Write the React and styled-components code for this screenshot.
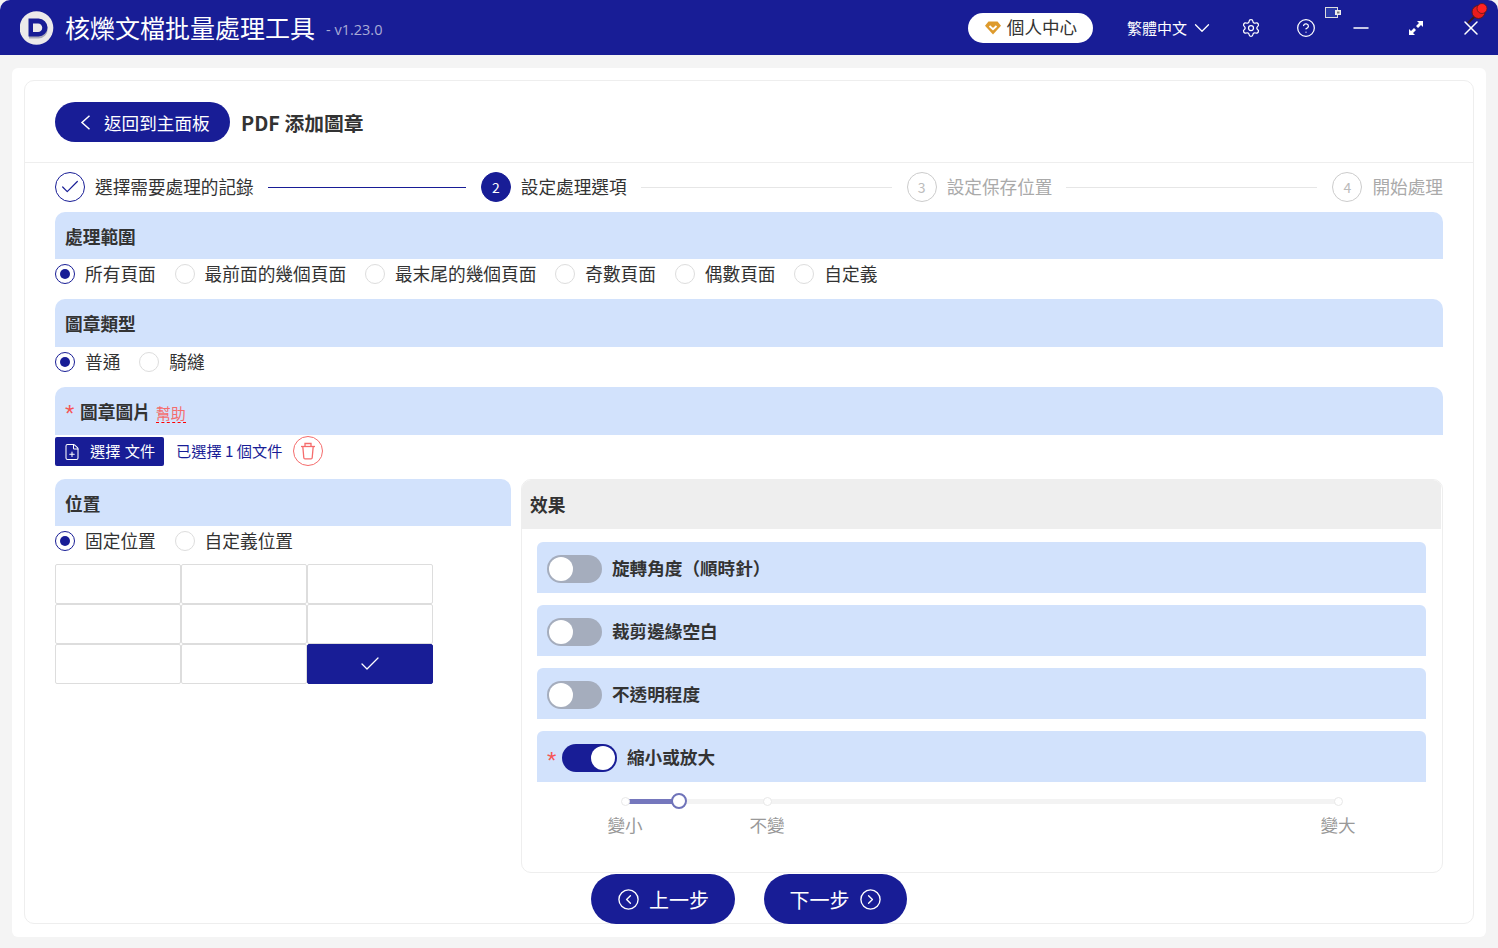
import React from "react";
import styled, { createGlobalStyle } from "styled-components";
import {
  Check,
  ChevronDown,
  CircleChevronLeft,
  CircleChevronRight,
  CircleHelp,
  FilePlus,
  Minus,
  Settings,
  X,
} from "lucide-react";

const BLUE = "#181d96";
const LIGHT = "#d2e2fc";
const FONT = `"Noto Sans CJK TC", "Noto Sans", sans-serif`;

const GlobalStyle = createGlobalStyle`
  html, body { margin: 0; padding: 0; background: #f4f4f4; }
  body { font-family: ${FONT}; color: #333; overflow: hidden; }
  * { box-sizing: border-box; }
`;

const Page = styled.div`
  width: 1498px;
  height: 948px;
  display: flex;
  flex-direction: column;
`;

const TopBar = styled.header`
  position: relative;
  flex: 0 0 55px;
  display: flex;
  align-items: center;
  padding: 0 17px 0 20px;
  background: ${BLUE};
  color: #fff;
  border-radius: 10px 10px 0 0;
`;

const Logo = styled.svg`
  width: 34px;
  height: 34px;
  margin-right: 11px;
  flex: none;
`;

const AppTitle = styled.div`
  font-size: 25px;
  line-height: 55px;
  white-space: nowrap;
`;

const Version = styled.span`
  margin-left: 11px;
  margin-top: 3px;
  font-family: "Open Sans", sans-serif;
  font-size: 14.5px;
  color: #a9abd6;
`;

const UserButton = styled.div`
  margin-left: auto;
  width: 125px;
  height: 30px;
  display: flex;
  align-items: center;
  justify-content: center;
  gap: 5px;
  background: #fff;
  color: #333;
  border-radius: 15px;
  font-size: 17.6px;
  padding-bottom: 2px;
  svg {
    margin-top: 2px;
  }
`;

const LangSwitch = styled.div`
  display: flex;
  align-items: center;
  gap: 2px;
  margin-left: 34px;
  font-size: 15px;
  width: 84px;
  white-space: nowrap;
  svg {
    flex: none;
  }
`;

const BarIcon = styled.span`
  display: flex;
  width: 20px;
  justify-content: center;
  margin-left: ${(p) => p.$gap}px;
  svg {
    flex: none;
  }
`;

const SmallWindow = styled.svg`
  position: absolute;
  left: 1325px;
  top: 7px;
`;

const Pin = styled.svg`
  position: absolute;
  left: 1466px;
  top: 1px;
`;

const Outer = styled.main`
  flex: 1;
  min-height: 0;
  padding: 13px 12px 11px;
`;

const Panel = styled.div`
  height: 100%;
  background: #fff;
  border-radius: 6px;
  padding: 12px 12px 13px;
`;

const Card = styled.div`
  height: 100%;
  border: 1px solid #eee;
  border-radius: 10px;
  display: flex;
  flex-direction: column;
`;

const CardHead = styled.div`
  height: 82px;
  flex: none;
  display: flex;
  align-items: flex-start;
  padding: 21px 30px 0;
  border-bottom: 1px solid #eee;
`;

const BackButton = styled.button`
  width: 175px;
  height: 40px;
  display: flex;
  align-items: center;
  gap: 13px;
  padding: 0 0 0 25px;
  border: 0;
  border-radius: 20px;
  background: ${BLUE};
  color: #fff;
  font-family: ${FONT};
  font-size: 17.6px;
`;

const PageTitle = styled.h1`
  margin: 0 0 0 11px;
  font-size: 19.8px;
  line-height: 42px;
  font-weight: 700;
  color: #333;
`;

const Content = styled.div`
  flex: 1;
  min-height: 0;
  display: flex;
  flex-direction: column;
  padding: 9px 30px 0;
  & > * {
    flex: none;
  }
`;

const Stepper = styled.div`
  display: flex;
  height: 30px;
  margin-bottom: 10px;
`;

const Step = styled.div`
  display: flex;
  align-items: center;
  flex: ${(p) => (p.$last ? "0 0 110px" : "1 1 0")};
  font-size: 17.65px;
  white-space: nowrap;
  color: ${(p) => (p.$muted ? "#aaa" : "#333")};
`;

const StepText = styled.span`
  padding-bottom: 2px;
`;

const StepDot = styled.span`
  width: 30px;
  height: 30px;
  flex: none;
  display: flex;
  align-items: center;
  justify-content: center;
  margin-right: 10px;
  border-radius: 50%;
  font-size: 14px;
  border: 1px solid ${(p) => (p.$state === "todo" ? "#ccc" : BLUE)};
  background: ${(p) => (p.$state === "active" ? BLUE : "#fff")};
  color: ${(p) => (p.$state === "active" ? "#fff" : p.$state === "todo" ? "#bbb" : BLUE)};
`;

const StepLine = styled.span`
  flex: 1;
  height: 1px;
  margin: 0 15px 0 14px;
  background: ${(p) => (p.$done ? BLUE : "#e6e6e6")};
`;

const SectionBar = styled.div`
  height: ${(p) => p.$h || 47}px;
  display: flex;
  align-items: center;
  padding-left: 10px;
  background: ${LIGHT};
  border-radius: 10px 10px 0 0;
  font-size: 17.7px;
  font-weight: 700;
  color: #333;
`;

const RadioRow = styled.div`
  height: 30px;
  display: flex;
  align-items: center;
  margin-bottom: ${(p) => p.$mb || 0}px;
`;

const RadioItem = styled.label`
  display: flex;
  align-items: center;
  margin-right: 18.8px;
  font-size: 17.7px;
  color: #333;
`;

const RadioText = styled.span`
  padding-bottom: 3px;
`;

const RadioMark = styled.span`
  width: 20px;
  height: 20px;
  margin-right: 10px;
  border-radius: 50%;
  border: 1px solid ${(p) => (p.$on ? BLUE : "#ddd")};
  display: flex;
  align-items: center;
  justify-content: center;
  &::after {
    content: "";
    display: ${(p) => (p.$on ? "block" : "none")};
    width: 10px;
    height: 10px;
    border-radius: 50%;
    background: ${BLUE};
  }
`;

const Required = styled.span`
  width: ${(p) => p.$w || 15}px;
  flex: none;
  font-family: "Liberation Sans", sans-serif;
  font-size: 24px;
  font-weight: 400;
  line-height: 20px;
  padding-top: 6px;
  color: #f55656;
`;

const HelpLink = styled.span`
  margin-left: 5px;
  margin-top: 4px;
  font-size: 15px;
  line-height: 19px;
  font-weight: 400;
  color: #f56c6c;
  border-bottom: 1px dashed #f00;
`;

const FileRow = styled.div`
  display: flex;
  align-items: center;
  height: 30px;
  margin: 1px 0 13px;
`;

const FileButton = styled.button`
  width: 109px;
  height: 29px;
  margin-top: 1px;
  display: flex;
  align-items: center;
  gap: 9px;
  padding: 0 0 3px 8px;
  border: 0;
  border-radius: 2px;
  background: ${BLUE};
  color: #fff;
  font-family: ${FONT};
  font-size: 15.2px;
  word-spacing: 1px;
  svg {
    margin-top: 3px;
  }
`;

const FileHint = styled.span`
  margin-left: 12px;
  padding-bottom: 3px;
  font-size: 15.2px;
  color: ${BLUE};
`;

const DeleteButton = styled.span`
  width: 30px;
  height: 30px;
  margin-left: 11px;
  display: flex;
  align-items: center;
  justify-content: center;
  border: 1px solid #f56c6c;
  border-radius: 50%;
  color: #f56c6c;
`;

const Columns = styled.div`
  display: flex;
  gap: 10px;
  align-items: flex-start;
`;

const LeftColumn = styled.section`
  flex: 0 0 456px;
`;

const PositionGrid = styled.div`
  display: grid;
  grid-template-columns: repeat(3, 126px);
  grid-auto-rows: 40px;
  margin-top: 8px;
`;

const PositionCell = styled.div`
  display: flex;
  align-items: center;
  justify-content: center;
  border: 1px solid ${(p) => (p.$on ? BLUE : "#ddd")};
  border-radius: 2px;
  background: ${(p) => (p.$on ? BLUE : "#fff")};
  color: #fff;
`;

const EffectPanel = styled.section`
  width: 922px;
  height: 394px;
  border: 1px solid #eee;
  border-radius: 10px;
  overflow: hidden;
`;

const EffectHead = styled.div`
  height: 49px;
  display: flex;
  align-items: center;
  padding: 0 0 2px 8px;
  background: #eee;
  font-size: 17.7px;
  font-weight: 700;
  margin-right: 1px;
`;

const EffectBody = styled.div`
  display: flex;
  flex-direction: column;
  gap: 12.5px;
  padding: 13px 16px 0 15px;
`;

const EffectRow = styled.div`
  height: 50.5px;
  display: flex;
  align-items: center;
  gap: 10px;
  padding: 3px 0 0 10px;
  background: ${LIGHT};
  border-radius: 6px 6px 0 0;
  font-size: 17.6px;
  font-weight: 700;
`;

const EffectText = styled.span`
  padding-bottom: 3px;
`;

const Toggle = styled.span`
  position: relative;
  width: 55px;
  height: 28px;
  flex: none;
  margin-top: 1px;
  border-radius: 14px;
  background: ${(p) => (p.$on ? BLUE : "#a5adbd")};
  &::after {
    content: "";
    position: absolute;
    top: 2px;
    left: ${(p) => (p.$on ? "29px" : "2px")};
    width: 24px;
    height: 24px;
    border-radius: 50%;
    background: #fff;
  }
`;

const Slider = styled.div`
  position: relative;
  width: 713px;
  height: 5px;
  margin: 17px 0 0 103px;
  background: #f3f3f3;
  border-radius: 3px;
`;

const SliderFill = styled.div`
  position: absolute;
  left: 0;
  top: 0;
  height: 5px;
  background: #7577bd;
  border-radius: 3px;
`;

const SliderDot = styled.span`
  position: absolute;
  top: -2px;
  width: 9px;
  height: 9px;
  margin-left: -4.5px;
  border-radius: 50%;
  background: #fff;
  border: 1px solid #e8e8e8;
`;

const SliderHandle = styled.span`
  position: absolute;
  top: -5.5px;
  width: 16px;
  height: 16px;
  margin-left: -8px;
  border-radius: 50%;
  background: #fff;
  border: 2px solid #6f73b9;
`;

const SliderLabel = styled.span`
  position: absolute;
  top: 13px;
  transform: translateX(-50%);
  font-size: 17.6px;
  color: #999;
  white-space: nowrap;
`;

const Footer = styled.div`
  display: flex;
  justify-content: center;
  gap: 29px;
  margin-top: 1px;
`;

const NavButton = styled.button`
  height: 50px;
  width: ${(p) => p.$w}px;
  display: flex;
  align-items: center;
  justify-content: center;
  gap: 9px;
  border: 0;
  border-radius: 25px;
  background: ${BLUE};
  color: #fff;
  font-family: ${FONT};
  font-size: 20px;
`;

const steps = [
  { label: "選擇需要處理的記錄", state: "done" },
  { label: "設定處理選項", n: 2, state: "active" },
  { label: "設定保存位置", n: 3, state: "todo" },
  { label: "開始處理", n: 4, state: "todo" },
];

const rangeOptions = ["所有頁面", "最前面的幾個頁面", "最末尾的幾個頁面", "奇數頁面", "偶數頁面", "自定義"];
const sliderMarks = [
  { pos: 0, label: "變小" },
  { pos: 142, label: "不變" },
  { pos: 713, label: "變大" },
];

function Radios({ options, mb }) {
  return (
    <RadioRow $mb={mb}>
      {options.map((o, i) => (
        <RadioItem key={o}>
          <RadioMark $on={i === 0} />
          <RadioText>{o}</RadioText>
        </RadioItem>
      ))}
    </RadioRow>
  );
}

function App() {
  return (
    <Page>
      <GlobalStyle />
      <TopBar>
        <Logo viewBox="0 0 34 34">
          <circle cx="16.5" cy="17" r="16.8" fill="#eceaea" />
          <path d="M9 9h9.5a9.2 9.2 0 0 1 0 18.4H9z" fill="#a9a9b8" />
          <path d="M8.5 7.5h10a9 9 0 0 1 0 18h-10z" fill={BLUE} />
          <path d="M13 12.5h5a4 4 0 0 1 0 8.5h-5z" fill="#eceaea" />
        </Logo>
        <AppTitle>核爍文檔批量處理工具</AppTitle>
        <Version>- v1.23.0</Version>
        <UserButton>
          <svg width="18" height="14" viewBox="0 0 17 14">
            <path d="M4 .5h9l3.5 4.2-8 8.8-8-8.8z" fill="#dd9a2c" />
            <path d="M5 5l3.5 3.2L12 5" fill="none" stroke="#fff" strokeWidth="1.8" />
          </svg>
          個人中心
        </UserButton>
        <LangSwitch>
          繁體中文
          <ChevronDown size={26} strokeWidth={1.2} />
        </LangSwitch>
        <BarIcon $gap={30}>
          <Settings size={20} strokeWidth={1.5} />
        </BarIcon>
        <BarIcon $gap={35}>
          <CircleHelp size={20} strokeWidth={1.5} />
        </BarIcon>
        <BarIcon $gap={35}>
          <Minus size={24} strokeWidth={1.5} />
        </BarIcon>
        <BarIcon $gap={35}>
          <svg width="16" height="16" viewBox="0 0 16 16" fill="currentColor">
            <path d="M9 1h6v6l-2-2-3 3-2-2 3-3z" />
            <path d="M7 15H1V9l2 2 3-3 2 2-3 3z" />
          </svg>
        </BarIcon>
        <BarIcon $gap={35}>
          <X size={24} strokeWidth={1.5} />
        </BarIcon>
        <SmallWindow width="17" height="12" viewBox="0 0 17 12">
          <rect x="0.5" y="0.5" width="12" height="10" fill="#2a3aa8" stroke="#ddd" />
          <rect x="10" y="3" width="6" height="5" fill="#eee" />
          <rect x="12" y="4.5" width="2.5" height="2" fill="#777" />
        </SmallWindow>
        <Pin width="24" height="24" viewBox="0 0 24 24">
          <path d="M2 22l7-7" stroke="#3a1a1a" strokeWidth="2" />
          <circle cx="12.5" cy="11" r="6.5" fill="#e81c1c" stroke="#5a1a20" strokeWidth="1" />
          <circle cx="16" cy="7.5" r="5" fill="#f22" stroke="#5a1a20" strokeWidth="0.8" />
        </Pin>
      </TopBar>
      <Outer>
        <Panel>
          <Card>
            <CardHead>
              <BackButton>
                <svg width="11" height="15" viewBox="0 0 11 15">
                  <path d="M9.5 .8L2 7.5l7.5 6.7" fill="none" stroke="currentColor" strokeWidth="1.5" />
                </svg>
                返回到主面板
              </BackButton>
              <PageTitle>PDF 添加圖章</PageTitle>
            </CardHead>
            <Content>
              <Stepper>
                {steps.map((s, i) => (
                  <Step key={s.label} $last={i === 3} $muted={s.state === "todo"}>
                    <StepDot $state={s.state}>{s.n || <Check size={22} strokeWidth={1.3} />}</StepDot>
                    <StepText>{s.label}</StepText>
                    {i < 3 && <StepLine $done={s.state === "done"} />}
                  </Step>
                ))}
              </Stepper>

              <SectionBar>處理範圍</SectionBar>
              <Radios options={rangeOptions} mb={10} />

              <SectionBar $h={48}>圖章類型</SectionBar>
              <Radios options={["普通", "騎縫"]} mb={10} />

              <SectionBar $h={48}>
                <Required>*</Required>
                圖章圖片
                <HelpLink>幫助</HelpLink>
              </SectionBar>
              <FileRow>
                <FileButton>
                  <FilePlus size={18} strokeWidth={1.4} />
                  選擇 文件
                </FileButton>
                <FileHint>已選擇 1 個文件</FileHint>
                <DeleteButton>
                  <svg width="16" height="18" viewBox="0 0 16 18" fill="none" stroke="currentColor" strokeWidth="1.3">
                    <path d="M1 4.5h14" />
                    <path d="M5 4.5V1.5h6v3" />
                    <path d="M2.8 4.5l1 11.2a1.2 1.2 0 0 0 1.2 1.1h6a1.2 1.2 0 0 0 1.2-1.1l1-11.2" />
                  </svg>
                </DeleteButton>
              </FileRow>

              <Columns>
                <LeftColumn>
                  <SectionBar>位置</SectionBar>
                  <Radios options={["固定位置", "自定義位置"]} />
                  <PositionGrid>
                    {Array.from({ length: 9 }, (_, i) => (
                      <PositionCell key={i} $on={i === 8}>
                        {i === 8 && <Check size={24} strokeWidth={1.3} />}
                      </PositionCell>
                    ))}
                  </PositionGrid>
                </LeftColumn>
                <EffectPanel>
                  <EffectHead>效果</EffectHead>
                  <EffectBody>
                    <EffectRow>
                      <Toggle />
                      <EffectText>旋轉角度（順時針）</EffectText>
                    </EffectRow>
                    <EffectRow>
                      <Toggle />
                      <EffectText>裁剪邊緣空白</EffectText>
                    </EffectRow>
                    <EffectRow>
                      <Toggle />
                      <EffectText>不透明程度</EffectText>
                    </EffectRow>
                    <EffectRow>
                      <Required $w={5}>*</Required>
                      <Toggle $on />
                      <EffectText>縮小或放大</EffectText>
                    </EffectRow>
                  </EffectBody>
                  <Slider>
                    <SliderFill style={{ width: 50 }} />
                    {sliderMarks.map((m) => (
                      <React.Fragment key={m.label}>
                        <SliderDot style={{ left: m.pos }} />
                        <SliderLabel style={{ left: m.pos }}>{m.label}</SliderLabel>
                      </React.Fragment>
                    ))}
                    <SliderHandle style={{ left: 54 }} />
                  </Slider>
                </EffectPanel>
              </Columns>

              <Footer>
                <NavButton $w={144}>
                  <CircleChevronLeft size={23} strokeWidth={1.4} />
                  上一步
                </NavButton>
                <NavButton $w={143}>
                  下一步
                  <CircleChevronRight size={23} strokeWidth={1.4} />
                </NavButton>
              </Footer>
            </Content>
          </Card>
        </Panel>
      </Outer>
    </Page>
  );
}

export default App;
